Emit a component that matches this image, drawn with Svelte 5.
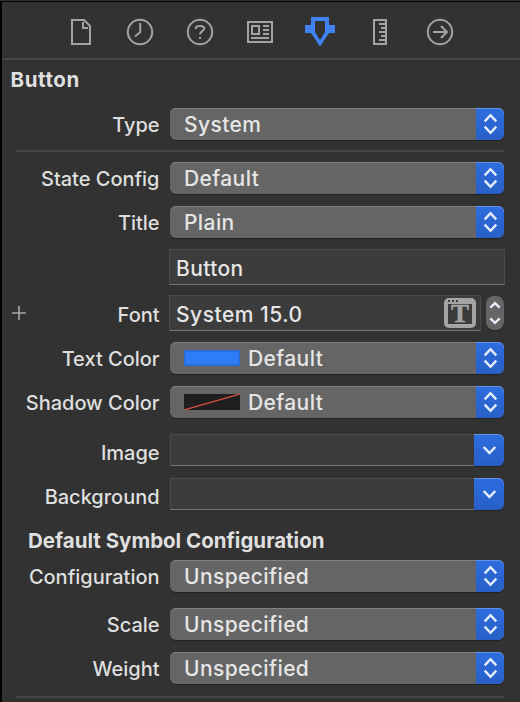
<script>
  const groups = [
    [
      { label: 'Type', kind: 'popup', value: 'System', gap: 0 },
      { kind: 'rule', gap: 10 },
      { label: 'State Config', kind: 'popup', value: 'Default', gap: 10 },
      { label: 'Title', kind: 'popup', value: 'Plain', gap: 12 },
      { label: '', kind: 'field', value: 'Button', gap: 11 },
      { label: 'Font', kind: 'font', value: 'System 15.0', gap: 10 },
      { label: 'Text Color', kind: 'popup', swatch: 'blue', value: 'Default', gap: 11 },
      { label: 'Shadow Color', kind: 'popup', swatch: 'none', value: 'Default', gap: 12 },
      { label: 'Image', kind: 'combo', gap: 16 },
      { label: 'Background', kind: 'combo', gap: 12 }
    ],
    [
      { label: 'Configuration', kind: 'popup', value: 'Unspecified', gap: 0 },
      { label: 'Scale', kind: 'popup', value: 'Unspecified', gap: 16 },
      { label: 'Weight', kind: 'popup', value: 'Unspecified', gap: 12 },
      { kind: 'rule', gap: 12 }
    ]
  ];
</script>

{#snippet rows(list)}
  {#each list as r}
    {#if r.kind === 'rule'}
      <div class="rule" style:margin-top="{r.gap}px"></div>
    {:else}
      <div class="row {r.kind}" style:margin-top="{r.gap}px">
        <div class="label">
          {#if r.kind === 'font'}
            <svg class="plus" width="14" height="14" viewBox="0 0 14 14"><path d="M7 0V14M0 7H14" /></svg>
          {/if}
          <span>{r.label}</span>
        </div>
        {#if r.kind === 'popup'}
          <div class="button">
            {#if r.swatch === 'blue'}
              <i class="swatch"></i>
            {:else if r.swatch === 'none'}
              <svg class="noswatch" width="56" height="16"><path d="M0 16L56 0" /></svg>
            {/if}
            <span class="value">{r.value}</span>
            <span class="cap">
              <svg width="28" height="32" viewBox="0 0 28 32"><path d="M8.7 13.3L14.5 7.2L20.3 13.3M8.7 18.7L14.5 24.8L20.3 18.7" /></svg>
            </span>
          </div>
        {:else if r.kind === 'field'}
          <div class="input"><span class="value">{r.value}</span></div>
        {:else if r.kind === 'font'}
          <div class="input">
            <span class="value">{r.value}</span>
            <svg class="fonticon" width="32" height="30" viewBox="0 0 32 30">
              <rect width="32" height="30" rx="5" fill="#a5a5a5" />
              <rect x="4" y="6" width="24" height="20" fill="#3c3c3c" />
              <path d="M4 2h2v2h-2zM8 2h2v2h-2zM12 2h2v2h-2z" fill="#3c3c3c" />
              <text x="16" y="24.3" text-anchor="middle" textLength="18" lengthAdjust="spacingAndGlyphs">T</text>
            </svg>
          </div>
          <div class="stepper">
            <svg width="18" height="34" viewBox="0 0 18 34"><path d="M4.3 11.6L9 7.2L13.7 11.6M4.3 22.4L9 26.8L13.7 22.4" /></svg>
          </div>
        {:else}
          <div class="well"></div>
          <div class="cap drop">
            <svg width="30" height="32" viewBox="0 0 30 32"><path d="M9.7 13L15.5 19L21.3 13" /></svg>
          </div>
        {/if}
      </div>
    {/if}
  {/each}
{/snippet}

<div class="panel">
  <nav>
    <svg width="30" height="32" viewBox="65 16 30 32"><path d="M72 20H84L90 26V44H72ZM83 22V28H88" /></svg>
    <svg width="30" height="32" viewBox="125 16 30 32"><circle cx="140" cy="32" r="12.2" /><path d="M140.2 23V32L135 36.5" /></svg>
    <svg width="30" height="32" viewBox="185 16 30 32"><circle cx="200" cy="32" r="12.2" /><path d="M195.8 29V28.3Q196 26 200 26Q204.3 26 204.3 28.6C204.3 31 200 31 200 34.6M200 37V39" /></svg>
    <svg width="30" height="32" viewBox="245 16 30 32"><path d="M248 22H272V42H248ZM252 26H259V34H252ZM251 38H269M263 26H269M263 30H269M263 34H269" /></svg>
    <svg class="on" width="30" height="32" viewBox="305 16 30 32"><path fill-rule="evenodd" d="M311 17H329V25H335V33H329L320 46.5L311 33H305V25H311ZM315 21V32L320 40L325 32V21Z" /></svg>
    <svg width="30" height="32" viewBox="365 16 30 32"><path d="M374 20H386V44H374ZM379 24H386M381 28H386M379 32H386M381 36H386M379 40H386" /></svg>
    <svg width="30" height="32" viewBox="425 16 30 32"><circle cx="440" cy="32" r="12.2" /><path d="M433 32H447M441 26L447 32L441 38" /></svg>
  </nav>
  <h1>Button</h1>
  <section>{@render rows(groups[0])}</section>
  <h2>Default Symbol Configuration</h2>
  <section>{@render rows(groups[1])}</section>
</div>

<style>
  :global(body) { background: #323232; padding-top: 1px; }
  .panel {
    box-sizing: border-box;
    width: 520px;
    height: 701px;
    overflow: hidden;
    background: #323232;
    border-left: 2px solid #000;
    border-top: 1px solid #000;
    color: #dfdfdf;
    font-family: Inter, "Liberation Sans", sans-serif;
    -webkit-font-smoothing: antialiased;
  }
  nav {
    display: flex;
    gap: 30px;
    box-sizing: border-box;
    height: 58px;
    padding: 14px 0 0 63px;
    border-bottom: 2px solid #464646;
  }
  nav svg { fill: none; stroke: #a3a3a3; stroke-width: 2; flex: none; }
  nav svg.on { fill: #4282f0; stroke: none; }
  h1, h2 { margin: 0; font-size: 20.5px; font-weight: 700; white-space: nowrap; }
  h1 { height: 48px; line-height: 39px; padding-left: 8.5px; letter-spacing: 0.6px; }
  h2 { height: 50px; line-height: 62px; padding-left: 26px; }
  .rule { height: 2px; width: 488px; margin-left: 14px; background: #464646; }
  .row { display: flex; height: 32px; }
  .row.field, .row.font { height: 36px; }
  .label {
    box-sizing: border-box;
    width: 168px;
    padding: 1px 10.5px 0 10px;
    display: flex;
    align-items: center;
    justify-content: flex-end;
    font-size: 20px;
    font-weight: 450;
    letter-spacing: -0.02px;
    white-space: nowrap;
    flex: none;
  }
  .field .label, .font .label { width: 167px; padding-right: 9.5px; padding-top: 3px; }
  .combo .label { padding-top: 5px; }
  .plus { stroke: #a8a8a8; stroke-width: 1.6; margin: 0 auto 4px 0; }
  .button {
    display: flex;
    align-items: center;
    box-sizing: border-box;
    width: 334px;
    padding-left: 14px;
    border-radius: 6px;
    background: #656565;
    box-shadow: inset 0 1px #808080, 0 1px 1px #222;
  }
  .value {
    padding-top: 1px;
    font-size: 21px;
    font-weight: 450;
    line-height: 32px;
    letter-spacing: 0.4px;
    color: #e6e6e6;
    white-space: nowrap;
  }
  .font .value { letter-spacing: 0.5px; }
  .button .value { padding-top: 2px; }
  .cap {
    width: 28px;
    height: 32px;
    margin-left: auto;
    border-radius: 0 6px 6px 0;
    background: linear-gradient(#2e6de0, #275fc5);
    box-shadow: inset 0 1px #6291e5;
  }
  .cap svg, .stepper svg { display: block; fill: none; stroke: #e6edfb; stroke-width: 2.4; }
  .drop { width: 30px; margin-left: 0; box-shadow: inset 0 1px #6291e5, 0 1px 1px #222; }
  .swatch { box-sizing: border-box; width: 56px; height: 16px; margin-right: 8px; background: #2f7df6; border: 2px solid #2970dd; }
  .noswatch { background: #1e1e1e; margin-right: 8px; stroke: #d04f43; stroke-width: 1.3; }
  .input, .well {
    box-sizing: border-box;
    display: flex;
    align-items: center;
    background: #3c3c3c;
    border: 1px solid #4b4b4b;
    border-bottom-color: #747474;
  }
  .input { width: 336px; padding: 3px 4px 0 6px; }
  .font .input { width: 312px; }
  .well { width: 304px; border-right: 0; }
  .fonticon { margin: -3px 0 0 auto; }
  .fonticon text { font: bold 25px "Liberation Serif", serif; fill: #a5a5a5; stroke: #a5a5a5; stroke-width: 0.4; }
  .stepper { width: 18px; height: 34px; margin: 1px 0 0 5px; border-radius: 8px; background: #656565; box-shadow: 0 1px 1px #222; }
</style>
